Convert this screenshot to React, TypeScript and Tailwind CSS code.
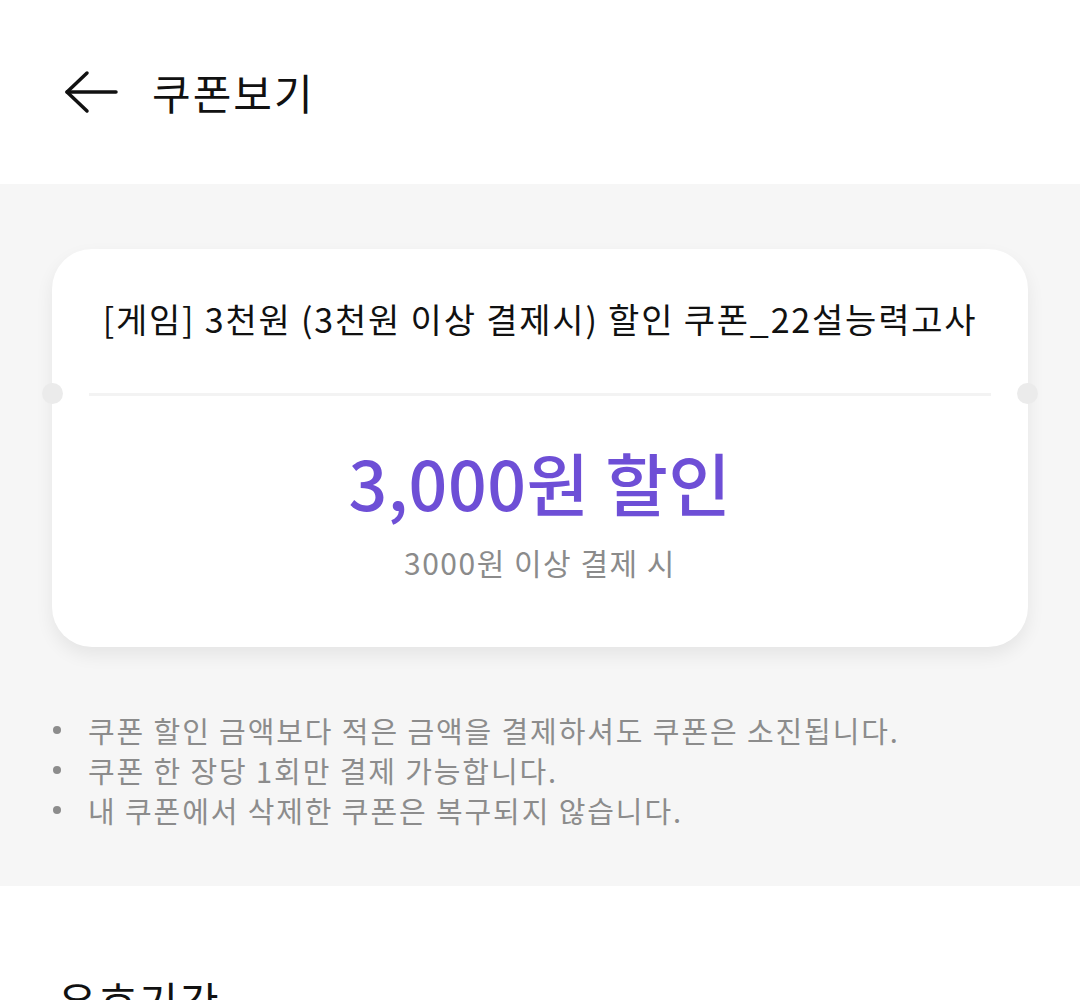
export default function App() {
  const notes = [
    '쿠폰 할인 금액보다 적은 금액을 결제하셔도 쿠폰은 소진됩니다.',
    '쿠폰 한 장당 1회만 결제 가능합니다.',
    '내 쿠폰에서 삭제한 쿠폰은 복구되지 않습니다.',
  ];

  return (
    <div className="w-[1080px] min-h-[1000px] bg-white font-['Noto_Sans_CJK_KR','Noto_Sans',sans-serif] overflow-hidden">
      {/* Header */}
      <header className="h-[184px] flex items-center pl-[64px]">
        <button className="w-[56px] h-[44px] flex items-center">
          <svg width="54" height="44" viewBox="0 0 54 44" fill="none" stroke="#111" strokeWidth="3.5" strokeLinecap="round" strokeLinejoin="round">
            <path d="M23 3 L3 22 L23 41" />
            <path d="M3 22 H52" />
          </svg>
        </button>
        <h1 className="ml-[32px] text-[42px] font-normal text-[#111] leading-none tracking-[2px]">쿠폰보기</h1>
      </header>

      {/* Coupon area */}
      <section className="bg-[#f6f6f6] pt-[65px] pb-[56px]">
        <div className="relative mx-[52px] bg-white rounded-[40px] shadow-[0_8px_18px_rgba(0,0,0,0.07)]">
          <div className="h-[144px] flex items-center justify-center pb-[6px]">
            <p className="text-[34px] text-[#111] tracking-[1.8px] whitespace-nowrap">[게임] 3천원 (3천원 이상 결제시) 할인 쿠폰_22설능력고사</p>
          </div>
          <div className="mx-[37px] h-[3px] bg-[#f3f3f3]" />
          <span className="absolute left-[-10px] top-[134px] w-[21px] h-[21px] rounded-full bg-[#ebebeb]" />
          <span className="absolute right-[-10px] top-[134px] w-[21px] h-[21px] rounded-full bg-[#ebebeb]" />
          <div className="flex flex-col items-center pt-[46px] pb-[65px]">
            <p className="text-[68px] font-medium text-[#6e4fd6] leading-[80px] tracking-[0.5px]">3,000원 할인</p>
            <p className="mt-[20px] text-[30px] text-[#8b8b8b] leading-[40px] tracking-[1.5px]">3000원 이상 결제 시</p>
          </div>
        </div>

        <ul className="mt-[63px] pl-[53px] flex flex-col">
          {notes.map((n) => (
            <li key={n} className="flex items-center text-[29px] leading-[40px] text-[#8c8c8c] tracking-[1.9px]">
              <span className="w-[8px] h-[8px] rounded-full bg-[#8c8c8c] mr-[27px]" />
              <span>{n}</span>
            </li>
          ))}
        </ul>
      </section>

      {/* Validity */}
      <section className="pt-[93px] pl-[58px]">
        <h2 className="text-[42px] text-[#111] leading-none tracking-[2px]">유효기간</h2>
      </section>
    </div>
  );
}
